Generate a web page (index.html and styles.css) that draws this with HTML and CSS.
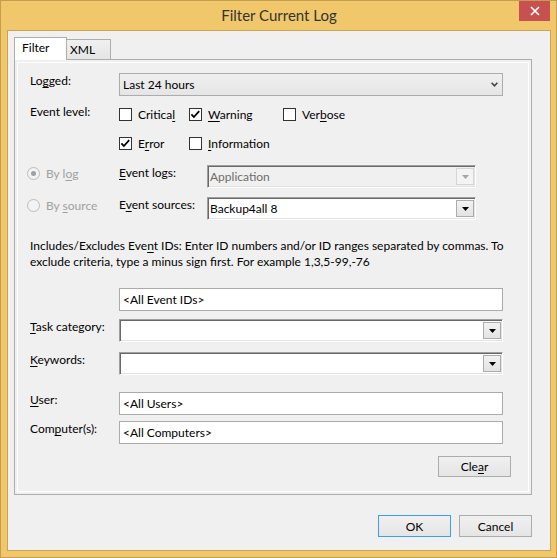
FILE: index.html
```html
<!DOCTYPE html>
<html>
<head>
<meta charset="utf-8">
<title>Filter Current Log</title>
<link rel="stylesheet" href="styles.css">
</head>
<body>
<div class="window">
  <div class="titlebar">Filter Current Log</div>
  <div class="close"><svg width="10" height="10" viewBox="0 0 10 10"><path d="M1 1L9 9M9 1L1 9" stroke="#fff" stroke-width="1.7" fill="none"/></svg></div>
  <div class="client">
    <div class="tabs">
      <div class="tab tab-active">Filter</div>
      <div class="tab tab-xml">XML</div>
    </div>
    <div class="panel">
      <div class="row">
        <div class="label">Lo<u>g</u>ged:</div>
        <div class="dropdown"><span>Last 24 hours</span><svg class="chev" width="7" height="5" viewBox="0 0 7 5"><polyline points="0.6,0.8 3.5,3.8 6.4,0.8" stroke="#444" stroke-width="1.6" fill="none"/></svg></div>
      </div>
      <div class="row row-level">
        <div class="label">Event level:</div>
        <div class="checks">
          <div class="check w70"><span class="box"></span><span>Critica<u>l</u></span></div>
          <div class="check w94"><span class="box"><svg width="11" height="11" viewBox="0 0 11 11"><path d="M1.4 5.4L3.9 8L9.2 2.2" stroke="#000" stroke-width="1.8" fill="none"/></svg></span><span><u>W</u>arning</span></div>
          <div class="check"><span class="box"></span><span>Ver<u>b</u>ose</span></div>
        </div>
      </div>
      <div class="row row-error">
        <div class="check w70"><span class="box"><svg width="11" height="11" viewBox="0 0 11 11"><path d="M1.4 5.4L3.9 8L9.2 2.2" stroke="#000" stroke-width="1.8" fill="none"/></svg></span><span>E<u>r</u>ror</span></div>
        <div class="check w94"><span class="box"></span><span><u>I</u>nformation</span></div>
      </div>
      <div class="row row-bylog">
        <div class="radio"><span class="rdot"><span class="rin"></span></span><span>By l<u>o</u>g</span></div>
        <div class="label-mid"><u>E</u>vent logs:</div>
        <div class="combo combo-short combo-disabled"><span>Application</span><span class="cbtn"><svg width="7" height="4" viewBox="0 0 7 4"><polygon points="0,0 7,0 3.5,4" fill="#a6a6a6"/></svg></span></div>
      </div>
      <div class="row row-bysource">
        <div class="radio"><span class="rdot"></span><span>By <u>s</u>ource</span></div>
        <div class="label-mid">E<u>v</u>ent sources:</div>
        <div class="combo combo-short"><span>Backup4all 8</span><span class="cbtn"><svg width="7" height="4" viewBox="0 0 7 4"><polygon points="0,0 7,0 3.5,4" fill="#000"/></svg></span></div>
      </div>
      <div class="row row-text">
        <div class="note">Includes/Excludes Eve<u>n</u>t IDs: Enter ID numbers and/or ID ranges separated by commas. To<br>exclude criteria, type a minus sign first. For example 1,3,5-99,-76</div>
      </div>
      <div class="row row-ids">
        <div class="textbox">&lt;All Event IDs&gt;</div>
      </div>
      <div class="row row-task">
        <div class="label"><u>T</u>ask category:</div>
        <div class="combo combo-wide"><span></span><span class="cbtn"><svg width="7" height="4" viewBox="0 0 7 4"><polygon points="0,0 7,0 3.5,4" fill="#000"/></svg></span></div>
      </div>
      <div class="row row-kw">
        <div class="label"><u>K</u>eywords:</div>
        <div class="combo combo-wide"><span></span><span class="cbtn"><svg width="7" height="4" viewBox="0 0 7 4"><polygon points="0,0 7,0 3.5,4" fill="#000"/></svg></span></div>
      </div>
      <div class="row row-user">
        <div class="label"><u>U</u>ser:</div>
        <div class="textbox">&lt;All Users&gt;</div>
      </div>
      <div class="row row-comp">
        <div class="label">Com<u>p</u>uter(s):</div>
        <div class="textbox">&lt;All Computers&gt;</div>
      </div>
      <div class="row row-clear">
        <div class="btn btn-clear">Cle<u>a</u>r</div>
      </div>
    </div>
    <div class="footer">
      <div class="btn btn-foot btn-ok">OK</div>
      <div class="btn btn-foot">Cancel</div>
    </div>
  </div>
</div>
</body>
</html>
```
FILE: styles.css
```css
* { box-sizing: border-box; }
html, body { margin: 0; padding: 0; }
body {
  width: 557px;
  height: 558px;
  overflow: hidden;
  font-family: Lato, "Noto Sans", sans-serif;
  font-size: 12px;
  color: #000;
  background: #f0f0f0;
}
u { text-decoration: underline; text-underline-offset: 2px; text-decoration-thickness: 1px; }

.window {
  position: relative;
  width: 557px;
  height: 558px;
  border: 1px solid #c29f4f;
  background: #f0c86b;
  padding: 0 5px 6px 6px;
}
.titlebar {
  height: 29px;
  line-height: 29px;
  text-align: center;
  font-size: 15px;
  color: #333;
}
.close {
  position: absolute;
  left: 518px;
  top: 0;
  width: 31px;
  height: 20px;
  background: #c75050;
  display: flex;
  align-items: center;
  justify-content: center;
}
.client {
  width: 544px;
  height: 521px;
  border: 1px solid #c8a556;
  background: #f0f0f0;
  padding: 6px 18px 0 6px;
}

/* tabs */
.tabs { display: flex; align-items: flex-end; height: 22px; }
.tab {
  line-height: 16px;
  border: 1px solid #adadad;
  border-bottom: none;
}
.tab-active {
  width: 53px;
  height: 23px;
  background: #fff;
  padding: 2px 0 0 7px;
  margin-bottom: -1px;
  position: relative;
  z-index: 1;
}
.tab-xml {
  width: 44px;
  height: 20px;
  border-left: none;
  background: linear-gradient(#f0f0f0, #e5e5e5);
  padding: 2px 0 0 3px;
}

/* panel */
.panel {
  width: 518px;
  height: 436px;
  border: 1px solid #adadad;
  box-shadow: inset 0 0 0 2px #f0f0f0, inset 0 0 0 3px #fff;
  padding: 13px 20px 0 15px;
}
.row { display: flex; align-items: flex-start; }
.label { width: 89px; flex: none; line-height: 16px; }
.label-mid { width: 88px; flex: none; line-height: 16px; }

.dropdown {
  width: 384px;
  height: 23px;
  border: 1px solid #acacac;
  background: linear-gradient(#f0f0f0, #e5e5e5);
  display: flex;
  align-items: center;
  justify-content: space-between;
  padding: 0 4px 0 3px;
}

.row-level { margin-top: 8px; }
.checks { display: flex; margin-top: 4px; }
.check { display: flex; align-items: center; height: 13px; line-height: 16px; flex: none; }
.w70 { width: 70px; }
.w94 { width: 94px; }
.box {
  width: 13px;
  height: 13px;
  flex: none;
  border: 1px solid #333;
  background: #fff;
  margin-right: 6px;
  display: flex;
}
.row-error { margin-top: 16px; padding-left: 89px; }

.row-bylog { margin-top: 15px; }
.row-bysource { margin-top: 9px; }
.radio {
  width: 92px;
  margin-left: -3px;
  flex: none;
  display: flex;
  align-items: center;
  height: 16px;
  color: #a0a0a0;
}
.rdot {
  width: 13px;
  height: 13px;
  border-radius: 50%;
  border: 1px solid #bcbcbc;
  background: #f3f3f3;
  margin-right: 6px;
  display: flex;
  align-items: center;
  justify-content: center;
  flex: none;
}
.rin { width: 5px; height: 5px; border-radius: 50%; background: #a0a0a0; }

.combo {
  height: 23px;
  display: flex;
  align-items: center;
  justify-content: space-between;
  border: 1px solid;
  border-color: #a0a0a0 #fff #fff #a0a0a0;
  box-shadow: inset 1px 1px 0 #696969, inset -1px -1px 0 #e3e3e3;
  background: #fff;
  padding: 0 1px 0 2px;
  flex: none;
}
.combo-short { width: 269px; }
.combo-wide { width: 384px; }
.combo-disabled { background: #f0f0f0; color: #6d6d6d; }
.cbtn {
  width: 18px;
  height: 17px;
  border: 1px solid #acacac;
  background: linear-gradient(#f2f2f2, #e3e3e3);
  display: flex;
  align-items: center;
  justify-content: center;
  flex: none;
}
.combo-disabled .cbtn { border-color: #d5d5d5; background: #f4f4f4; }

.row-text { margin-top: 18px; }
.note { line-height: 16px; white-space: nowrap; }

.textbox {
  width: 384px;
  height: 23px;
  border: 1px solid #ababab;
  background: #fff;
  padding-left: 3px;
  display: flex;
  align-items: center;
  flex: none;
}
.row-ids { margin-top: 18px; padding-left: 89px; }
.row-task { margin-top: 8px; }
.row-kw { margin-top: 10px; }
.row-user { margin-top: 17px; }
.row-comp { margin-top: 6px; }
.row-clear { margin-top: 12px; justify-content: flex-end; }

.btn {
  width: 73px;
  height: 21px;
  border: 1px solid #acacac;
  background: linear-gradient(#f0f0f0, #e5e5e5);
  display: flex;
  align-items: center;
  justify-content: center;
}
.footer { display: flex; justify-content: flex-end; gap: 8px; margin-top: 20px; }
.btn-foot { height: 22px; }
.btn-ok { border-color: #3c9ef0; }
```
